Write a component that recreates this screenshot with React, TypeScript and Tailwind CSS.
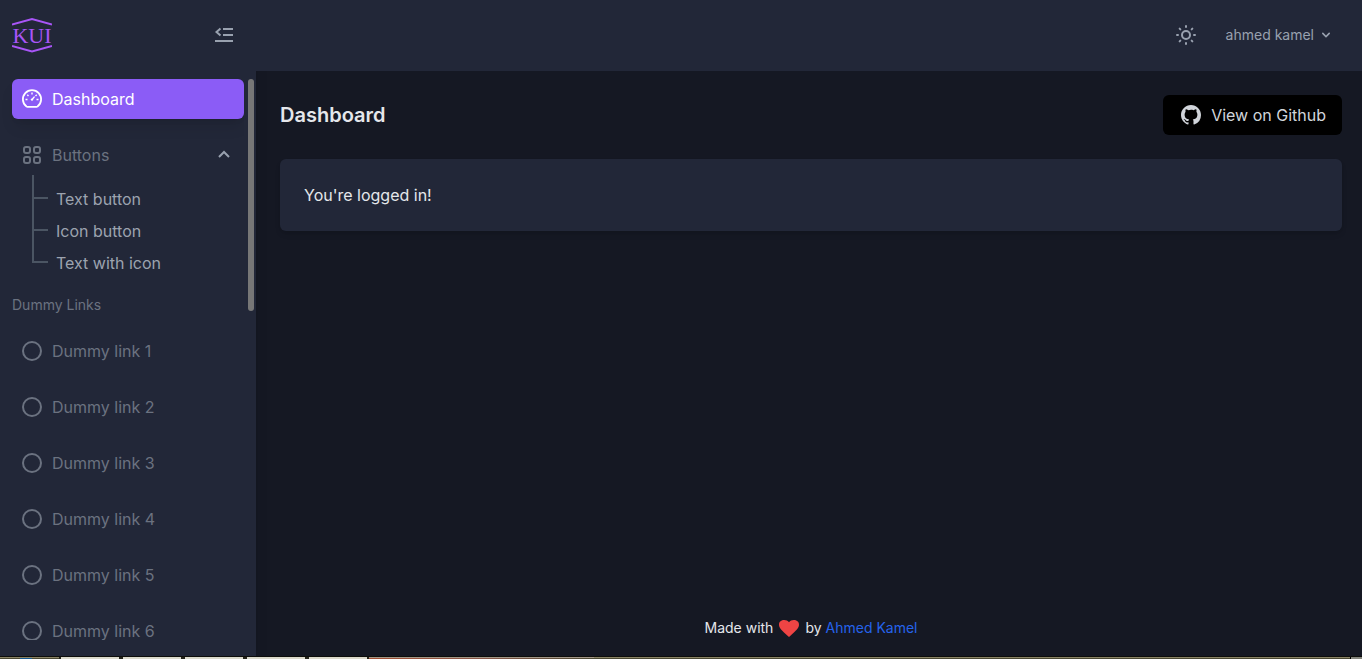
import { useState } from 'react';

const dummyLinks = [1, 2, 3, 4, 5, 6];
const buttonLinks = ['Text button', 'Icon button', 'Text with icon'];

function Logo() {
  return (
    <svg className="h-10 w-10" viewBox="0 0 40 40" fill="none" stroke="#a855f7" strokeWidth="1.9" role="img" aria-label="K UI">
      <path d="M0 9.500 20 4l20 5.500M0 31 20 36.500l20-5.500" />
      <text x="20" y="28" textAnchor="middle" fontSize="22" fill="#a855f7" stroke="none" fontFamily="'Liberation Serif', serif">KUI</text>
    </svg>
  );
}

function FoldIcon() {
  return (
    <svg className="h-6 w-6" viewBox="0 0 24 24" fill="none" stroke="currentColor" strokeWidth="2" aria-hidden="true">
      <path d="M11 6h10M11 12h10M3 18h18M8.500 5.500 4.500 9l4 3.500" />
    </svg>
  );
}

function GaugeIcon() {
  return (
    <svg className="h-6 w-6" viewBox="0 0 24 24" fill="none" stroke="currentColor" aria-hidden="true">
      <path strokeWidth="1.800" strokeLinejoin="round" d="M6.500 19.500a9.100 9.100 0 1 1 11 0 2 2 0 0 1-1 .3h-9a2 2 0 0 1-1-.3Z" />
      <path strokeWidth="1.400" d="M12 5.500v2M7.300 7.800l1.200 1.200M16.700 7.800l-1.200 1.200M5.500 12.500h2M16.500 12.500h2" />
      <path strokeWidth="1.300" strokeLinecap="round" d="m12.500 12 1.700-2" />
      <circle cx="12" cy="12.600" r="1.200" fill="currentColor" stroke="none" />
    </svg>
  );
}

function GridIcon() {
  return (
    <svg className="h-6 w-6" viewBox="0 0 24 24" fill="none" stroke="currentColor" strokeWidth="2" aria-hidden="true">
      <path d="M4 6a2 2 0 012-2h2a2 2 0 012 2v2a2 2 0 01-2 2H6a2 2 0 01-2-2V6zM14 6a2 2 0 012-2h2a2 2 0 012 2v2a2 2 0 01-2 2h-2a2 2 0 01-2-2V6zM4 16a2 2 0 012-2h2a2 2 0 012 2v2a2 2 0 01-2 2H6a2 2 0 01-2-2v-2zM14 16a2 2 0 012-2h2a2 2 0 012 2v2a2 2 0 01-2 2h-2a2 2 0 01-2-2v-2z" />
    </svg>
  );
}

function SunIcon() {
  return (
    <svg className="h-6 w-6" viewBox="0 0 24 24" fill="none" stroke="currentColor" strokeWidth="2" strokeLinecap="round" aria-hidden="true">
      <circle cx="12" cy="12" r="4" />
      <path d="M12 3v1M12 20v1M3 12h1M20 12h1M5.636 5.636l.707.707M17.657 17.657l.707.707M18.364 5.636l-.707.707M6.343 17.657l-.707.707" />
    </svg>
  );
}

function GithubIcon() {
  return (
    <svg className="h-6 w-6" viewBox="0 0 24 24" fill="currentColor" aria-hidden="true">
      <path d="M12 2C6.477 2 2 6.484 2 12.017c0 4.425 2.865 8.180 6.839 9.504.5.092.682-.217.682-.483 0-.237-.008-.868-.013-1.703-2.782.605-3.369-1.343-3.369-1.343-.454-1.158-1.110-1.466-1.110-1.466-.908-.620.069-.608.069-.608 1.003.070 1.531 1.032 1.531 1.032.892 1.530 2.341 1.088 2.910.832.092-.647.350-1.088.636-1.338-2.220-.253-4.555-1.113-4.555-4.951 0-1.093.390-1.988 1.029-2.688-.103-.253-.446-1.272.098-2.650 0 0 .840-.270 2.750 1.026A9.564 9.564 0 0112 6.844c.850.004 1.705.115 2.504.337 1.909-1.296 2.747-1.027 2.747-1.027.546 1.379.202 2.398.1 2.651.640.700 1.028 1.595 1.028 2.688 0 3.848-2.339 4.695-4.566 4.943.359.309.678.920.678 1.855 0 1.338-.012 2.419-.012 2.747 0 .268.180.580.688.482A10.019 10.019 0 0022 12.017C22 6.484 17.522 2 12 2z" />
    </svg>
  );
}

function Sidebar() {
  const [open, setOpen] = useState(true);
  return (
    <aside className="flex w-64 shrink-0 flex-col gap-6 bg-[#222738] py-4 shadow-lg">
      <div className="flex shrink-0 items-start justify-between px-3">
        <a href="#" className="-my-px"><Logo /></a>
        <button type="button" aria-label="Toggle sidebar" className="px-2 pt-[7px] pb-2 text-gray-400"><FoldIcon /></button>
      </div>
      <div className="flex min-h-0 flex-1">
        <nav aria-label="Main" className="flex min-w-0 flex-1 flex-col gap-4 overflow-y-auto pl-3 [scrollbar-width:none]">
          <a href="#" className="flex h-10 shrink-0 items-center gap-2 rounded-md bg-[#8b5cf6] px-2 text-white shadow-lg">
            <GaugeIcon />Dashboard
          </a>
          <div className="shrink-0">
            <button type="button" aria-expanded={open} onClick={() => setOpen(!open)} className="flex h-10 w-full items-center gap-2 px-2 text-[#6b7280]">
              <GridIcon />Buttons
              <svg className="mr-1 ml-auto h-4 w-4 text-gray-400" viewBox="0 0 16 16" fill="none" stroke="currentColor" strokeWidth="2" aria-hidden="true"><path d="m3 10 5-5 5 5" /></svg>
            </button>
            {open && (
              <ul className="pt-2 pl-5">
                {buttonLinks.map((label, i) => (
                  <li key={label} className="relative flex h-8 items-center pl-6">
                    <span className={`absolute left-0 border-l-2 border-[#4b5563] ${i === 0 ? '-top-2' : 'top-0'} ${i === 2 ? 'bottom-4' : 'bottom-0'}`} />
                    <span className="absolute bottom-4 left-0 w-4 border-b-2 border-[#4b5563]" />
                    <a href="#" className="text-[#9ca3af]">{label}</a>
                  </li>
                ))}
              </ul>
            )}
          </div>
          <h2 className="shrink-0 text-sm text-[#6b7280]">Dummy Links</h2>
          {dummyLinks.map((n) => (
            <a key={n} href="#" className="flex h-10 shrink-0 items-center gap-2 px-2 text-[#6b7280]">
              <svg className="h-6 w-6" viewBox="0 0 24 24" fill="none" stroke="currentColor" strokeWidth="2" aria-hidden="true"><circle cx="12" cy="12" r="9" /></svg>
              Dummy link {n}
            </a>
          ))}
        </nav>
        <div className="w-3 px-1 pr-0.5"><div className="h-[232px] w-1.5 rounded-full bg-[#777777]" /></div>
      </div>
    </aside>
  );
}

function DesktopStrip() {
  return (
    <div className="flex h-[3px] shrink-0 border-t border-[#0d0d0b] bg-[#4b4933]" aria-hidden="true">
      <div className="w-[59px] border-t border-[#8c8567] pl-5"><div className="h-px w-3 bg-[#14578f]" /></div>
      {[0, 1, 2, 3, 4].map((n) => (
        <div key={n} className="w-[62px] border-x-2 border-[#25241b] bg-[#dcdacc]" />
      ))}
      <div className="w-[225px] border-t border-[#a4988a] bg-linear-to-r from-[#a34e31] via-[#895849] to-[#4b4933]" />
      <div className="flex-1 border-t border-[#8c8567]" />
      <div className="w-3 border-l border-black bg-[#85867e]" />
    </div>
  );
}

export default function App() {
  return (
    <div className="flex h-screen flex-col bg-[#151823] font-['Inter',sans-serif] text-base text-[#e5e7eb]">
      <div className="flex min-h-0 flex-1">
        <Sidebar />
        <div className="flex min-w-0 flex-1 flex-col">
          <header className="flex h-[71px] shrink-0 items-center justify-end gap-5 bg-[#222738] pr-7 pb-0.5 text-gray-400">
            <button type="button" aria-label="Toggle dark mode" className="p-2"><SunIcon /></button>
            <button type="button" className="flex items-center gap-1 text-sm">
              ahmed kamel
              <svg className="h-4 w-4" viewBox="0 0 20 20" fill="currentColor" aria-hidden="true"><path fillRule="evenodd" d="M5.293 7.293a1 1 0 011.414 0L10 10.586l3.293-3.293a1 1 0 111.414 1.414l-4 4a1 1 0 01-1.414 0l-4-4a1 1 0 010-1.414z" /></svg>
            </button>
          </header>
          <main className="flex flex-1 flex-col gap-6 py-6 pr-5 pl-6">
            <div className="flex items-center justify-between">
              <h1 className="text-xl font-semibold">Dashboard</h1>
              <a href="#" className="flex h-10 items-center gap-2 rounded-md bg-black px-4 text-[#d1d5db]"><GithubIcon />View on Github</a>
            </div>
            <section className="rounded-md bg-[#222738] p-6 shadow-md">You're logged in!</section>
          </main>
          <footer className="flex items-center justify-center gap-1 pr-5 pb-4 pl-6 text-sm">
            <span>Made with</span>
            <svg className="h-6 w-6 text-[#ef4444]" viewBox="0 0 24 24" fill="currentColor" role="img" aria-label="love"><path d="m12 21-1.450-1.320C5.400 15.010 2 11.930 2 8.650 2 5.570 4.420 4 7.300 4c1.740 0 3.610.9 4.700 2.300C13.090 4.900 14.960 4 16.700 4 19.580 4 22 5.570 22 8.650c0 3.280-3.400 6.360-8.550 11.030L12 21z" /></svg>
            <span>by <a href="#" className="text-[#2563eb]">Ahmed Kamel</a></span>
          </footer>
        </div>
      </div>
      <DesktopStrip />
    </div>
  );
}
